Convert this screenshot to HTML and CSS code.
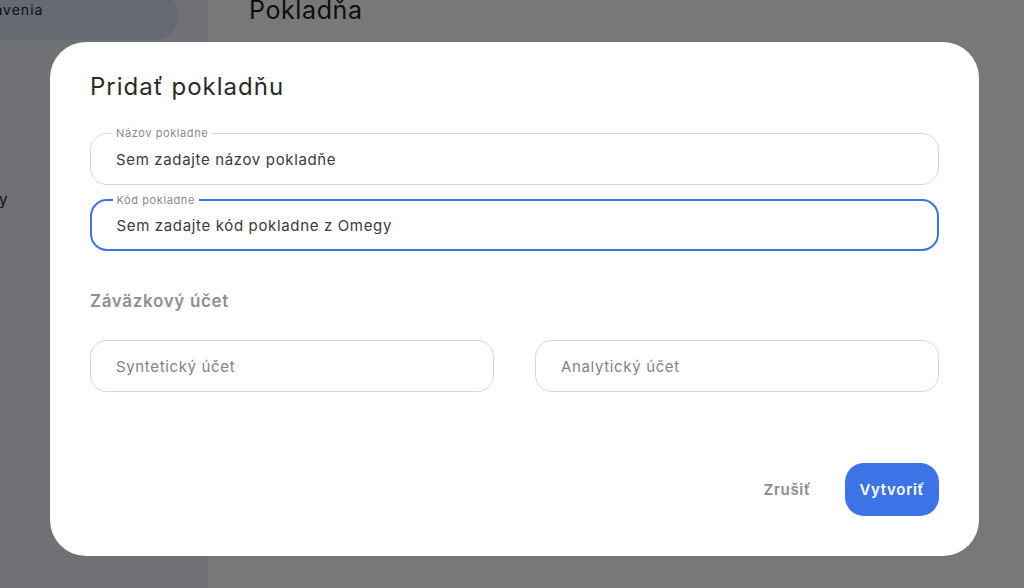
FILE: index.html
```html
<!DOCTYPE html>
<html lang="sk">
<head>
<meta charset="utf-8">
<title>Pokladňa</title>
<link rel="stylesheet" href="styles.css">
</head>
<body>
<div class="app">
  <aside class="sidebar">
    <div class="nav-item active">Nastavenia</div>
    <div class="nav-item other">Pokladne a účty</div>
  </aside>
  <main class="main">
    <h1 class="page-title">Pokladňa</h1>
  </main>
</div>

<div class="overlay">
  <div class="modal">
    <h2 class="modal-title">Pridať pokladňu</h2>
    <div class="field">
      <span class="field-label">Názov pokladne</span>
      <div class="field-value">Sem zadajte názov pokladňe</div>
    </div>
    <div class="field focused">
      <span class="field-label">Kód pokladne</span>
      <div class="field-value">Sem zadajte kód pokladne z Omegy</div>
    </div>
    <div class="section-label">Záväzkový účet</div>
    <div class="row">
      <div class="field"><div class="field-value placeholder">Syntetický účet</div></div>
      <div class="field"><div class="field-value placeholder">Analytický účet</div></div>
    </div>
    <div class="actions">
      <button class="btn btn-text">Zrušiť</button>
      <button class="btn btn-primary">Vytvoriť</button>
    </div>
  </div>
</div>
</body>
</html>
```

FILE: styles.css
```css
* { box-sizing: border-box; }
html, body { margin: 0; padding: 0; }
body {
  width: 1024px;
  height: 588px;
  overflow: hidden;
  font-family: Inter, "Noto Sans", "Liberation Sans", sans-serif;
  background: #ffffff;
  color: #2b2b2b;
}
.app {
  display: flex;
  height: 588px;
}
.sidebar {
  width: 208px;
  flex: none;
  background: #f1f1f8;
  border-right: 1px solid #f6f6fa;
  display: flex;
  flex-direction: column;
}
.nav-item {
  font-size: 14px;
  letter-spacing: 1px;
  color: #1f2937;
}
.nav-item.active {
  margin-left: -48px;
  margin-top: -10px;
  height: 50px;
  padding: 11px 0 0 8px;
  background: #d5e0f2;
  border-radius: 0 24px 24px 0;
  width: 226px;
}
.nav-item.other {
  margin-top: 150px;
  margin-left: -120px;
  font-size: 15px;
}
.main {
  flex: 1;
  padding-left: 41px;
}
.page-title {
  margin: -5px 0 0;
  font-size: 25px;
  font-weight: 400;
  letter-spacing: 0.6px;
  color: #1f1f1f;
}
.overlay {
  position: fixed;
  inset: 0;
  background: rgba(0, 0, 0, 0.53);
}
.modal {
  position: absolute;
  left: 50px;
  top: 42px;
  width: 929px;
  height: 514px;
  background: #ffffff;
  border-radius: 36px;
  padding: 29px 40px 40px;
  display: flex;
  flex-direction: column;
}
.modal-title {
  margin: 0 0 30px;
  font-size: 24px;
  line-height: 32px;
  font-weight: 400;
  letter-spacing: 1px;
  color: #2a2a2a;
}
.field {
  position: relative;
  height: 52px;
  border: 1.5px solid #d7d7d7;
  border-radius: 17px;
  display: flex;
  align-items: center;
  padding: 1px 25px 0;
}
.field + .field { margin-top: 14px; }
.field.focused { border: 2px solid #3c74e8; padding: 1px 24.5px 0; }
.field-label {
  position: absolute;
  left: 21px;
  top: -8px;
  padding: 0 4px;
  background: #ffffff;
  font-size: 11px;
  line-height: 14px;
  color: #858a90;
  letter-spacing: 0.6px;
}
.field.focused .field-label { left: 20.5px; top: -8.5px; }
.field-value {
  font-size: 15px;
  color: #3a3a3a;
  letter-spacing: 0.65px;
}
.field-value.placeholder { color: #7e838b; }
.section-label {
  margin-top: 38px;
  font-size: 17px;
  line-height: 24px;
  font-weight: 600;
  letter-spacing: 0.65px;
  color: #8b9098;
}
.row {
  margin-top: 27px;
  display: grid;
  grid-template-columns: 1fr 1fr;
  gap: 41px;
}
.row .field + .field { margin-top: 0; }
.actions {
  margin-top: auto;
  display: flex;
  justify-content: flex-end;
  align-items: center;
  gap: 18px;
}
.btn {
  font-family: inherit;
  font-size: 15px;
  font-weight: 600;
  letter-spacing: 0.7px;
  border: none;
  height: 53px;
  cursor: pointer;
}
.btn-text {
  background: transparent;
  color: #878c94;
  padding: 0 16px;
}
.btn-primary {
  background: #3c74e8;
  color: #ffffff;
  border-radius: 19px;
  padding: 0;
  width: 94px;
}
```
